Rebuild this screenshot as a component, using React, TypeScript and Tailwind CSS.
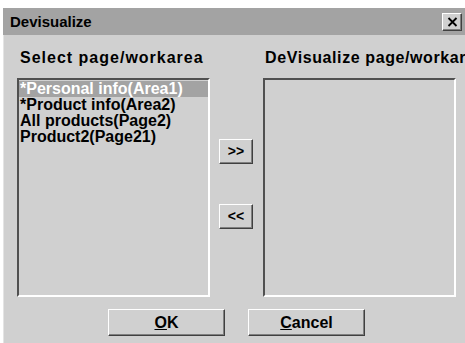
import React from "react";

const items = [
  "*Personal info(Area1)",
  "*Product info(Area2)",
  "All products(Page2)",
  "Product2(Page21)",
];

const raised =
  "border border-t-white border-l-white border-b-[#404040] border-r-[#404040] shadow-[inset_-1px_-1px_0_#808080] bg-[#d0d0d0]";
const sunken =
  "border-2 border-t-[#505050] border-l-[#505050] border-b-white border-r-white bg-[#d0d0d0]";

const App = () => {
  return (
    <div
      className="w-[465px] h-[343px] bg-white pt-2 pl-[3px] flex flex-col overflow-hidden text-black"
      style={{ fontFamily: '"Liberation Sans", Arial, sans-serif' }}
    >
      {/* Title bar */}
      <div className="h-[27px] bg-[#a3a3a3] flex items-center justify-between pl-[7px] pr-[3px]">
        <span className="text-[15px] font-bold leading-none">Devisualize</span>
        <button className={`w-[20px] h-[18px] flex items-center justify-center ${raised}`}>
          <svg width="11" height="10" viewBox="0 0 11 10">
            <path d="M1.5 1 L9.5 9 M9.5 1 L1.5 9" stroke="#000" strokeWidth="1.8" />
          </svg>
        </button>
      </div>

      {/* Body */}
      <div className="flex-1 bg-[#d0d0d0] border-l border-[#e4e4e4] pl-[13px] pt-[11px] flex flex-col">
        <div className="flex text-[16px] font-bold whitespace-nowrap h-[32px]">
          <div className="w-[246px] shrink-0 pl-[3px] tracking-[1px]">Select page/workarea</div>
          <div className="pl-[2px] shrink-0 tracking-[0.6px]">DeVisualize page/workarea</div>
        </div>

        <div className="flex">
          <div className={`w-[193px] h-[219px] ${sunken} pt-[1px]`}>
            {items.map((it, i) => (
              <div
                key={it}
                className={`h-[16px] leading-[16px] pl-[1px] text-[16px] font-bold whitespace-nowrap ${
                  i === 0 ? "bg-[#a3a3a3] text-white" : ""
                }`}
              >
                {it}
              </div>
            ))}
          </div>

          <div className="w-[34px] ml-[9px] flex flex-col pt-[61px] gap-[40px]">
            <button className={`w-[34px] h-[25px] text-[14px] font-bold flex items-center justify-center ${raised}`}>
              &gt;&gt;
            </button>
            <button className={`w-[34px] h-[25px] text-[14px] font-bold flex items-center justify-center ${raised}`}>
              &lt;&lt;
            </button>
          </div>

          <div className={`w-[193px] h-[219px] ml-[10px] ${sunken}`} />
        </div>

        <div className="flex gap-[23px] pl-[91px] mt-[12px]">
          <button className={`w-[117px] h-[27px] text-[16px] font-bold flex items-center justify-center ${raised}`}>
            <span className="underline">O</span>K
          </button>
          <button className={`w-[117px] h-[27px] text-[16px] font-bold flex items-center justify-center ${raised}`}>
            <span className="underline">C</span>ancel
          </button>
        </div>
      </div>
    </div>
  );
};

export default App;
